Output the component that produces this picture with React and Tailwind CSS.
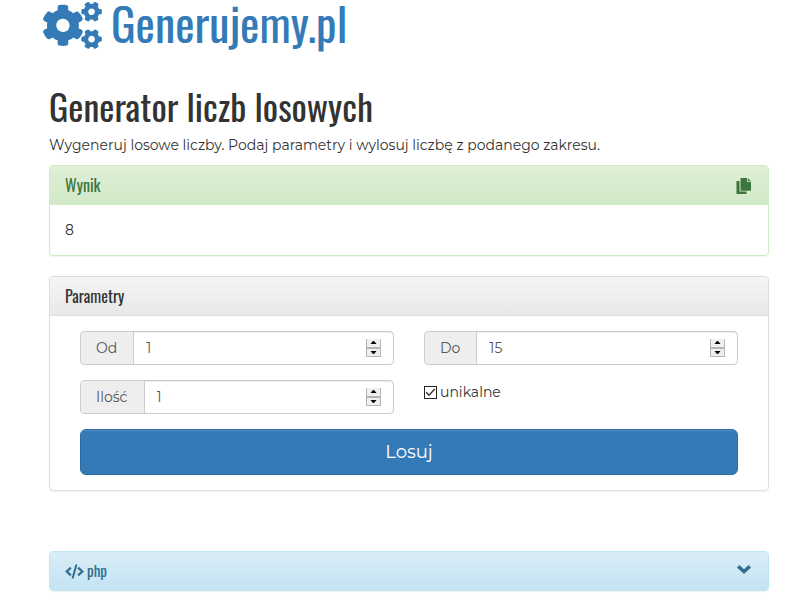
import { useState } from "react";
import { FaCogs } from "react-icons/fa";

const heading = "font-['Oswald','Liberation_Sans_Narrow',sans-serif]";

const CopyIcon = () => (
  <svg className="block h-4 w-[15px]" viewBox="0 0 15 16" fill="currentColor" aria-hidden="true">
    <path d="M0.5 3H3.5V13.5H10.5V16H0.5z" />
    <path d="M4.5 0H11V4H15V12.8H4.5z" />
    <path d="M11.8 0L15 3.2H11.8z" />
  </svg>
);

const ChevronIcon = () => (
  <svg className="block h-[9px] w-[14px]" viewBox="0 0 14 9" fill="currentColor" aria-hidden="true">
    <path d="M0 2.4L2.4 0 7 4.3 11.6 0 14 2.4 7 9z" />
  </svg>
);

const CodeIcon = () => (
  <svg
    className="block h-[15px] w-[19px]"
    viewBox="0 0 19 15"
    fill="none"
    stroke="currentColor"
    strokeWidth="2.3"
    aria-hidden="true"
  >
    <path d="M5.9 3.6L1.7 7.5l4.2 3.9" />
    <path d="M13.1 3.6l4.2 3.9-4.2 3.9" />
    <path d="M11.4 0.4L7.6 14.6" strokeWidth="2" />
  </svg>
);

const Panel = ({ className, children }) => (
  <section className={`rounded border shadow-[0_1px_1px_rgba(0,0,0,0.05)] ${className}`}>{children}</section>
);

const Spinner = ({ label, onStep }) => (
  <span className="mr-3 flex h-[18px] w-[15px] flex-col border border-t-0 border-[#b5b5b5]">
    <button
      type="button"
      aria-label={`${label} +`}
      onClick={() => onStep(1)}
      className="flex flex-1 items-center justify-center bg-[#efefef]"
    >
      <svg className="h-[3px] w-[7px]" viewBox="0 0 7 3" aria-hidden="true">
        <path d="M0.5 3L3 0h1l2.5 3z" />
      </svg>
    </button>
    <button
      type="button"
      aria-label={`${label} -`}
      onClick={() => onStep(-1)}
      className="flex flex-1 items-center justify-center border-t-2 border-[#b5b5b5] bg-[#efefef]"
    >
      <svg className="h-[3px] w-[7px]" viewBox="0 0 7 3" aria-hidden="true">
        <path d="M0.5 0h6L4 3H3z" />
      </svg>
    </button>
  </span>
);

const NumberField = ({ id, label, initial }) => {
  const [value, setValue] = useState(initial);

  return (
    <div className="flex h-[34px] items-center overflow-hidden rounded border border-[#ccc] text-[#555] shadow-[inset_0_1px_1px_rgba(0,0,0,0.075)]">
      <label htmlFor={id} className="flex h-full items-center bg-[#eee] pr-4 pl-[15px]">
        {label}
      </label>
      <input
        id={id}
        type="number"
        value={value}
        onChange={(e) => setValue(Number(e.target.value))}
        className="h-full min-w-0 flex-1 border-l border-[#ccc] bg-transparent px-3 outline-none [appearance:textfield] [&::-webkit-inner-spin-button]:appearance-none"
      />
      <Spinner label={label} onStep={(step) => setValue(value + step)} />
    </div>
  );
};

const App = () => {
  const [unique, setUnique] = useState(true);

  return (
    <div className="bg-white pr-5 pb-6 pl-[49px] font-['Montserrat','Inter',sans-serif] text-sm leading-5 text-[#333]">
      <header className={heading}>
        <a href="/" className="-ml-1.5 flex h-[51px] items-start gap-[9px] text-[46px] leading-[44px] text-[#337ab7]">
          <FaCogs className="mt-0.5 h-[47px] w-[59px]" />
          Generujemy.pl
        </a>
      </header>

      <main>
        <h1 className={`${heading} mt-8 text-[36px] leading-[46px]`}>Generator liczb losowych</h1>
        <p className="mt-1.5 mb-[10px] whitespace-nowrap">
          Wygeneruj losowe liczby. Podaj parametry i wylosuj liczbę z podanego zakresu.
        </p>

        <Panel className="border-[#d0e9c6]">
          <div className="flex h-[39px] items-center justify-between rounded-t-[3px] bg-linear-to-b from-[#dff0d8] to-[#d0e9c6] pr-[17px] pl-[15px] text-[#3c763d]">
            <h2 className={`${heading} pb-0.5 text-base leading-5`}>Wynik</h2>
            <button type="button" aria-label="Kopiuj">
              <CopyIcon />
            </button>
          </div>
          <div className="p-[15px]">8</div>
        </Panel>

        <Panel className="mt-5 border-[#ddd]">
          <h2
            className={`${heading} flex h-[39px] items-center rounded-t-[3px] border-b border-[#ddd] bg-linear-to-b from-[#f5f5f5] to-[#e8e8e8] px-[15px] text-base`}
          >
            Parametry
          </h2>
          <form className="px-[30px] py-[15px]" onSubmit={(e) => e.preventDefault()}>
            <div className="grid grid-cols-2 gap-x-[30px] gap-y-[15px]">
              <NumberField id="from" label="Od" initial={1} />
              <NumberField id="to" label="Do" initial={15} />
              <NumberField id="count" label="Ilość" initial={1} />
              <label className="flex h-6 items-center gap-[3px]">
                <span className="relative flex size-[13px]">
                  <input
                    type="checkbox"
                    checked={unique}
                    onChange={(e) => setUnique(e.target.checked)}
                    className="peer size-[13px] appearance-none border border-[#222] bg-white"
                  />
                  <svg
                    className="pointer-events-none absolute inset-0 hidden size-[13px] peer-checked:block"
                    viewBox="0 0 13 13"
                    fill="none"
                    stroke="#333"
                    strokeWidth="1.4"
                    aria-hidden="true"
                  >
                    <path d="M2.2 6.2L5 9.2l5.8-6.2" />
                  </svg>
                </span>
                unikalne
              </label>
            </div>
            <button
              type="submit"
              className="mt-[15px] block h-[46px] w-full rounded-md border border-[#2e6da4] bg-[#337ab7] text-lg text-white shadow-[inset_0_1px_0_rgba(255,255,255,0.15)]"
            >
              Losuj
            </button>
          </form>
        </Panel>

        <Panel className="mt-[60px] border-[#bce8f1]">
          <button
            type="button"
            className={`${heading} flex h-[38px] w-full items-center justify-between rounded-[3px] bg-linear-to-b from-[#d9edf7] to-[#c4e3f3] pr-[17px] pl-[15px] text-[#31708f]`}
          >
            <span className="flex items-center gap-[3px] text-[15px]">
              <CodeIcon />
              <span className="pb-0.5">php</span>
            </span>
            <span className="pb-1">
              <ChevronIcon />
            </span>
          </button>
        </Panel>
      </main>
    </div>
  );
};

export default App;
